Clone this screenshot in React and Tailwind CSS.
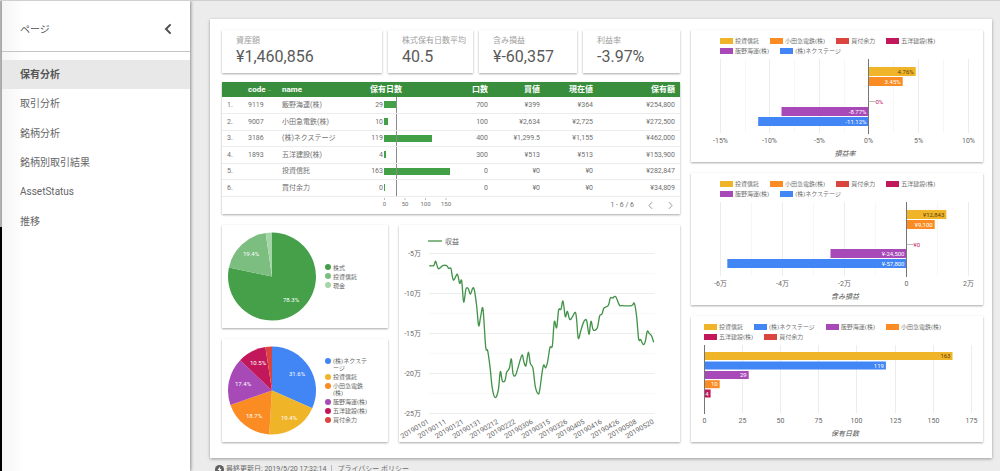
import React from 'react';

const C = {
  yellow: '#f0b429',
  orange: '#fb8c23',
  red: '#db4540',
  crimson: '#c2185b',
  purple: '#a74ab8',
  blue: '#4285f4',
};

const PAGES = ['保有分析', '取引分析', '銘柄分析', '銘柄別取引結果', 'AssetStatus', '推移'];

const HOLDINGS = [
  { code: '9119', name: '飯野海運(株)', days: 29, units: '700', buy: '¥399', now: '¥364', total: '¥254,800' },
  { code: '9007', name: '小田急電鉄(株)', days: 10, units: '100', buy: '¥2,634', now: '¥2,725', total: '¥272,500' },
  { code: '3186', name: '(株)ネクステージ', days: 119, units: '400', buy: '¥1,299.5', now: '¥1,155', total: '¥462,000' },
  { code: '1893', name: '五洋建設(株)', days: 4, units: '300', buy: '¥513', now: '¥513', total: '¥153,900' },
  { code: '', name: '投資信託', days: 163, units: '0', buy: '¥0', now: '¥0', total: '¥282,847' },
  { code: '', name: '買付余力', days: 0, units: '0', buy: '¥0', now: '¥0', total: '¥34,809' },
];

const LEGEND_PROFIT = [
  ['投資信託', C.yellow],
  ['小田急電鉄(株)', C.orange],
  ['買付余力', C.red],
  ['五洋建設(株)', C.crimson],
  ['飯野海運(株)', C.purple],
  ['(株)ネクステージ', C.blue],
];

const LEGEND_DAYS = [
  ['投資信託', C.yellow],
  ['(株)ネクステージ', C.blue],
  ['飯野海運(株)', C.purple],
  ['小田急電鉄(株)', C.orange],
  ['五洋建設(株)', C.crimson],
  ['買付余力', C.red],
];

const PROFIT_POINTS = [
  [118, 137], [131, 137], [137, 124], [145, 146], [158, 137], [170, 137], [176, 145], [183, 146], [190, 180],
  [202, 163], [209, 190], [215, 182], [221, 246], [228, 207], [235, 206], [241, 223], [248, 205], [253, 210],
  [260, 258], [266, 317], [272, 290], [279, 267], [287, 380], [293, 392], [300, 440], [307, 505], [316, 533],
  [325, 510], [331, 455], [337, 483], [345, 482], [350, 457], [358, 445], [364, 417], [369, 460], [376, 467],
  [385, 440], [396, 405], [402, 427], [408, 437], [415, 397], [421, 430], [429, 445], [436, 500], [445, 522],
  [450, 505], [456, 460], [461, 435], [467, 443], [473, 425], [480, 382], [487, 378], [493, 305], [500, 323],
  [506, 270], [513, 268], [519, 243], [526, 290], [532, 274], [539, 298], [546, 293], [556, 277], [560, 300],
  [565, 355], [573, 330], [582, 304], [590, 302], [597, 343], [603, 304], [610, 330], [622, 323], [629, 288],
  [636, 282], [642, 264], [655, 256], [661, 234], [668, 234], [677, 230], [688, 255], [695, 257], [725, 257],
  [733, 250], [740, 290], [746, 357], [752, 359], [760, 374], [766, 364], [772, 334], [778, 341], [785, 348],
  [791, 367],
];

const DATES = [
  '20190101', '20190111', '20190121', '20190131', '20190212', '20190222', '20190306',
  '20190315', '20190326', '20190405', '20190416', '20190426', '20190508', '20190520',
];

// Catmull-Rom spline through the given points.
function smooth(points) {
  let d = `M${points[0][0]} ${points[0][1]}`;
  for (let i = 0; i < points.length - 1; i++) {
    const a = points[i - 1] || points[i];
    const b = points[i];
    const c = points[i + 1];
    const e = points[i + 2] || c;
    d += `C${b[0] + (c[0] - a[0]) / 6} ${b[1] + (c[1] - a[1]) / 6} ${c[0] - (e[0] - b[0]) / 6} ${c[1] - (e[1] - b[1]) / 6} ${c[0]} ${c[1]}`;
  }
  return d;
}

function Card({ className = '', children, ...rest }) {
  return (
    <section className={`min-w-0 bg-white shadow-[0_1px_2px_rgba(0,0,0,0.35)] ${className}`} {...rest}>
      {children}
    </section>
  );
}

function Kpi({ label, value }) {
  return (
    <Card className="flex h-[43px] flex-col gap-[2px] overflow-hidden pt-[6px] pl-[14px]">
      <h2 className="text-[8px] leading-[10px] whitespace-nowrap text-[#9e9e9e]">{label}</h2>
      <p className="text-[16px] leading-[18px] whitespace-nowrap text-[#5a5a5a]">{value}</p>
    </Card>
  );
}

function Sidebar() {
  return (
    <aside className="z-10 flex w-[188px] shrink-0 flex-col bg-white bg-linear-to-r from-[#f5f5f5] to-white to-12% shadow-[1px_0_3px_rgba(0,0,0,0.4)]">
      <div className="flex h-[51px] items-center justify-between border-b border-[#c4c4c4] pt-[6px] pr-[18px] pl-[18px]">
        <h1 className="text-[10px] text-[#555]">ページ</h1>
        <button type="button" aria-label="閉じる" className="flex h-3 w-2 items-center justify-center">
          <svg viewBox="0 0 8 12" className="h-3 w-2" fill="none" stroke="#505050" strokeWidth="2">
            <path d="M6.6 1.4 2 6l4.6 4.6" />
          </svg>
        </button>
      </div>
      <nav className="mt-2 grid h-44 grid-rows-6 text-[10px] text-[#666]">
        {PAGES.map((p, i) => (
          <a
            key={p}
            href="#"
            aria-current={i === 0 ? 'page' : undefined}
            className={`flex items-center pl-[18px] ${i === 0 ? 'bg-[#e8e8e8] font-bold text-[#555]' : ''}`}
          >
            {p}
          </a>
        ))}
      </nav>
    </aside>
  );
}

function HoldingsTable() {
  return (
    <Card className="text-[7px] leading-[8px] text-[#707070]">
      <table className="w-full table-fixed border-collapse">
        <colgroup>
          <col className="w-[26px]" />
          <col className="w-[34px]" />
          <col className="w-[88px]" />
          <col className="w-[90px]" />
          <col className="w-[28px]" />
          <col className="w-[52px]" />
          <col className="w-[53px]" />
          <col className="w-[87px]" />
        </colgroup>
        <thead>
          <tr className="h-[15px] bg-[#388e3c] text-[8px] whitespace-nowrap text-white">
            <td className="p-0" />
            <th className="p-0 text-left">
              code <span className="text-[6px] font-normal text-[#9ccc9e]">–</span>
            </th>
            <th className="p-0 text-left">name</th>
            <th className="p-0 text-left">保有日数</th>
            <th className="p-0 text-right">口数</th>
            <th className="p-0 text-right">買値</th>
            <th className="p-0 text-right">現在値</th>
            <th className="p-0 pr-[5px] text-right">保有額</th>
          </tr>
        </thead>
        <tbody>
          {HOLDINGS.map((h, i) => (
            <tr key={h.name} className="border-b border-[#ececec] odd:h-[16px] even:h-[17px]">
              <td className="p-0 pl-[5px]">{i + 1}.</td>
              <td className="p-0">{h.code}</td>
              <td className="p-0">{h.name}</td>
              <td className="relative p-0">
                <div className="flex items-center gap-px">
                  <span className="w-[13px] text-right">{h.days}</span>
                  <div className="min-w-0 flex-1">
                    <div className="h-[7px] min-w-px bg-[#43a047]" style={{ width: `${(h.days / 187) * 100}%` }} />
                  </div>
                </div>
                <div className="absolute inset-y-0 left-[26px] w-px bg-[#8a8a8a]" />
              </td>
              <td className="p-0 text-right">{h.units}</td>
              <td className="p-0 text-right">{h.buy}</td>
              <td className="p-0 text-right">{h.now}</td>
              <td className="p-0 pr-[5px] text-right">{h.total}</td>
            </tr>
          ))}
        </tbody>
      </table>
      <div className="flex h-[17px] items-center pr-[6px] pl-[152px]">
        <svg viewBox="0 0 90 17" className="h-[17px] w-[90px]" aria-hidden="true">
          {[0, 50, 100, 150].map((v) => (
            <g key={v}>
              <path d={`M${10.5 + v * 0.41} 1v2`} stroke="#bbb" strokeWidth="1" />
              <text x={10.5 + v * 0.41} y="9" textAnchor="middle" className="fill-[#707070] text-[6px]">
                {v}
              </text>
            </g>
          ))}
        </svg>
        <div className="ml-auto flex items-center gap-[13px]">
          <span>1 - 6 / 6</span>
          <button type="button" aria-label="前へ" className="flex w-[7px] justify-center">
            <svg viewBox="0 0 7 9" className="h-[9px] w-[7px]" fill="none" stroke="#999">
              <path d="M5 1.2 2 4.5l3 3.3" />
            </svg>
          </button>
          <button type="button" aria-label="次へ" className="flex w-[7px] justify-center">
            <svg viewBox="0 0 7 9" className="h-[9px] w-[7px]" fill="none" stroke="#999">
              <path d="M2 1.2 5 4.5 2 7.8" />
            </svg>
          </button>
        </div>
      </div>
    </Card>
  );
}

function PieCard({ slices, label }) {
  let acc = 0;
  const at = (f) => [50 + 44 * Math.sin(2 * Math.PI * f), 51.5 - 44 * Math.cos(2 * Math.PI * f)];
  return (
    <Card className="flex h-[103px] items-center gap-[3px]" aria-label={label}>
      <svg viewBox="0 0 100 103" className="h-[103px] w-[100px] shrink-0">
        {slices.map((s) => {
          const [x0, y0] = at(acc / 100);
          acc += s.value;
          const [x1, y1] = at(acc / 100);
          return (
            <path key={s.color} d={`M50 51.5L${x0} ${y0}A44 44 0 ${s.value > 50 ? 1 : 0} 1 ${x1} ${y1}Z`} fill={s.color} />
          );
        })}
        {slices.filter((s) => s.at).map((s) => (
          <text key={s.color} x={s.at[0]} y={s.at[1] + 2} textAnchor="middle" className="fill-white text-[6px]">
            {s.value.toFixed(1)}%
          </text>
        ))}
      </svg>
      <ul className="flex flex-col gap-[2px] text-[6px] leading-[7px] whitespace-nowrap text-[#666]">
        {slices.map((s) => (
          <li key={s.color} className="flex gap-[2px]">
            <span className="flex h-[7px] items-center">
              <svg viewBox="0 0 6 6" className="size-[6px]">
                <circle cx="3" cy="3" r="3" fill={s.color} />
              </svg>
            </span>
            <span>
              {s.name.map((line) => (
                <span key={line} className="block">
                  {line}
                </span>
              ))}
            </span>
          </li>
        ))}
      </ul>
    </Card>
  );
}

function ProfitLine() {
  return (
    <Card aria-label="収益">
      <svg viewBox="0 0 281 217" className="block h-auto w-full">
        <path d="M29 16h14" stroke="#43934a" strokeWidth="1.3" />
        <text x="46" y="18.5" className="fill-[#666] text-[7px]">収益</text>
        {[0, 1, 2, 3, 4, 5, 6, 7, 8].map((i) => (
          <path key={i} d={`M30 ${28.5 + i * 20}H256`} stroke={i % 2 ? '#f8f8f8' : '#ededed'} strokeWidth="1" />
        ))}
        {['-5万', '-10万', '-15万', '-20万', '-25万'].map((t, i) => (
          <text key={t} x="22" y={31 + i * 40} textAnchor="end" className="fill-[#666] text-[7px]">
            {t}
          </text>
        ))}
        <g transform="translate(-9 -5) scale(0.3333)">
          <path d={smooth(PROFIT_POINTS)} fill="none" stroke="#43934a" strokeWidth="4" strokeLinejoin="round" />
        </g>
        {DATES.map((t, i) => {
          const x = 30.5 + i * 17.3;
          return (
            <text key={t} x={x} y="198" transform={`rotate(-30 ${x} 198)`} textAnchor="end" className="fill-[#666] text-[7px]">
              {t}
            </text>
          );
        })}
      </svg>
    </Card>
  );
}

function ChartLegend({ items, className }) {
  return (
    <ul className={`flex flex-wrap gap-x-[11px] pt-[6px] text-[6px] leading-[10px] whitespace-nowrap text-[#707070] ${className}`}>
      {items.map(([name, color]) => (
        <li key={name} className="flex items-center gap-[2px]">
          <svg viewBox="0 0 13 6" className="h-[6px] w-[13px]">
            <rect width="13" height="6" fill={color} />
          </svg>
          {name}
        </li>
      ))}
    </ul>
  );
}

function BarCard({ legend, legendClass, height, zero, bars, ticks, minor = [], bottom, title, nil }) {
  return (
    <Card aria-label={title}>
      <ChartLegend items={legend} className={legendClass} />
      <svg viewBox={`0 26 292 ${height - 26}`} className="block h-auto w-full">
        {minor.map((x) => (
          <path key={x} d={`M${x} 29V${bottom}`} stroke="#f7f7f7" strokeWidth="1" />
        ))}
        {ticks.map(([t, x]) => (
          <g key={t}>
            <path d={`M${x} 29V${bottom}`} stroke="#ececec" strokeWidth="1" />
            <text x={x} y={bottom + 10} textAnchor="middle" className="fill-[#666] text-[7px]">
              {t}
            </text>
          </g>
        ))}
        {bars.map((b) => (
          <g key={b.y}>
            <rect x={Math.min(zero, zero + b.w)} y={b.y} width={Math.abs(b.w)} height={b.h} fill={b.color} />
            <text
              x={Math.max(zero, zero + b.w) - 2}
              y={b.y + b.h / 2 + 2.2}
              textAnchor="end"
              className="text-[6px]"
              fill={b.color === C.yellow ? '#5c4210' : '#fff'}
            >
              {b.label}
            </text>
          </g>
        ))}
        <path d={`M${zero} 29V${bottom + 1}`} stroke="#757575" strokeWidth="1" />
        {nil && (
          <g>
            <path d={`M${zero} 71.5h7`} stroke="#aaa" strokeWidth="0.8" />
            <text x={zero + 7} y="73.5" className="text-[6px]" fill={C.crimson}>
              {nil}
            </text>
          </g>
        )}
        <text x="154" y={bottom + 22.5} textAnchor="middle" className="fill-[#555] text-[7px] italic">
          {title}
        </text>
      </svg>
    </Card>
  );
}

export default function App() {
  return (
    <div className="flex h-screen overflow-hidden border-t border-[#d0d0d0] bg-[#ececec] font-[Roboto,'Noto_Sans_CJK_JP',sans-serif]">
      <div className="flex w-[2px] shrink-0 flex-col">
        <div className="h-[226px] bg-[#b4b4b4]" />
        <div className="flex-1 bg-black" />
      </div>
      <Sidebar />
      <div className="min-w-0 flex-1 pt-[18px] pr-2 pl-5">
        <main className="grid grid-cols-[458fr_292fr] gap-[11px] bg-white pt-[11px] pr-[9px] pb-4 pl-3 shadow-[0_1px_3px_rgba(0,0,0,0.35)]">
          <div className="flex min-w-0 flex-col">
            <div className="grid grid-cols-[160fr_85fr_98fr_97fr] gap-[6px]">
              <Kpi label="資産額" value="¥1,460,856" />
              <Kpi label="株式保有日数平均" value="40.5" />
              <Kpi label="含み損益" value="¥-60,357" />
              <Kpi label="利益率" value="-3.97%" />
            </div>
            <div className="mt-[9px]">
              <HoldingsTable />
            </div>
            <div className="mt-[11px] grid grid-cols-[166fr_281fr] gap-[11px]">
              <div className="flex min-w-0 flex-col gap-[11px]">
                <PieCard
                  label="資産構成"
                  slices={[
                    { name: ['株式'], value: 78.3, color: '#45a049', at: [69, 75] },
                    { name: ['投資信託'], value: 19.4, color: '#7cbd80', at: [29, 29] },
                    { name: ['現金'], value: 2.3, color: '#a5d6a7' },
                  ]}
                />
                <PieCard
                  label="銘柄構成"
                  slices={[
                    { name: ['(株)ネクステ', 'ージ'], value: 31.6, color: C.blue, at: [75, 35] },
                    { name: ['投資信託'], value: 19.4, color: C.yellow, at: [67, 79] },
                    { name: ['小田急電鉄', '(株)'], value: 18.7, color: C.orange, at: [32, 77] },
                    { name: ['飯野海運(株)'], value: 17.4, color: C.purple, at: [21, 45] },
                    { name: ['五洋建設(株)'], value: 10.5, color: C.crimson, at: [36, 24] },
                    { name: ['買付余力'], value: 2.4, color: C.red },
                  ]}
                />
              </div>
              <ProfitLine />
            </div>
          </div>
          <div className="flex min-w-0 flex-col gap-[11px]">
            <BarCard
              legend={LEGEND_PROFIT}
              legendClass="pl-[29px]"
              height={132}
              zero={177.5}
              bottom={103}
              title="損益率"
              nil="0%"
              ticks={[['-15%', 29.5], ['-10%', 78.5], ['-5%', 128.5], ['0%', 177.5], ['5%', 227.5], ['10%', 277.5]]}
              minor={[54.5, 103.5, 153.5, 202.5, 252.5]}
              bars={[
                { y: 37, h: 9, w: 47.2, color: C.yellow, label: '4.76%' },
                { y: 47, h: 9, w: 34.2, color: C.orange, label: '3.45%' },
                { y: 77, h: 9, w: -87, color: C.purple, label: '-8.77%' },
                { y: 87, h: 9, w: -110.3, color: C.blue, label: '-11.12%' },
              ]}
            />
            <BarCard
              legend={LEGEND_PROFIT}
              legendClass="pl-[29px]"
              height={132}
              zero={215.5}
              bottom={103}
              title="含み損益"
              nil="¥0"
              ticks={[['-6万', 29.5], ['-4万', 91.5], ['-2万', 153.5], ['0', 215.5], ['2万', 277.5]]}
              minor={[60.5, 122.5, 184.5, 246.5]}
              bars={[
                { y: 37, h: 9, w: 39.8, color: C.yellow, label: '¥12,843' },
                { y: 47, h: 9, w: 28.2, color: C.orange, label: '¥9,100' },
                { y: 76, h: 9, w: -76, color: C.purple, label: '¥-24,500' },
                { y: 86, h: 9, w: -179.2, color: C.blue, label: '¥-57,800' },
              ]}
            />
            <BarCard
              legend={LEGEND_DAYS}
              legendClass="pl-[13px]"
              height={126}
              zero={13.5}
              bottom={97}
              title="保有日数"
              ticks={[['0', 13.5], ['25', 51.5], ['50', 89.5], ['75', 127.5], ['100', 165.5], ['125', 204.5], ['150', 242.5], ['175', 280.5]]}
              bars={[
                { y: 36, h: 8, w: 248, color: C.yellow, label: '163' },
                { y: 45.5, h: 8, w: 181.4, color: C.blue, label: '119' },
                { y: 55, h: 8, w: 44.2, color: C.purple, label: '29' },
                { y: 64.2, h: 8, w: 15.2, color: C.orange, label: '10' },
                { y: 73.5, h: 8, w: 6.1, color: C.crimson, label: '4' },
              ]}
            />
          </div>
        </main>
        <footer className="flex items-center gap-[2px] pt-[6px] pl-[5px] text-[7px] leading-[10px] whitespace-nowrap text-[#6a6a6a]">
          <svg viewBox="0 0 9 9" className="size-[9px]">
            <circle cx="4.5" cy="4.5" r="4.5" fill="#5f5f5f" />
            <path d="M5.1 1.4 2.6 5h1.6v2.6L6.6 4H5.1z" fill="#fff" />
          </svg>
          <span>最終更新日: 2019/5/20 17:32:14</span>
          <span className="mx-[3px] h-[8px] w-px bg-[#bbb]" />
          <a href="#">プライバシー ポリシー</a>
        </footer>
      </div>
    </div>
  );
}
